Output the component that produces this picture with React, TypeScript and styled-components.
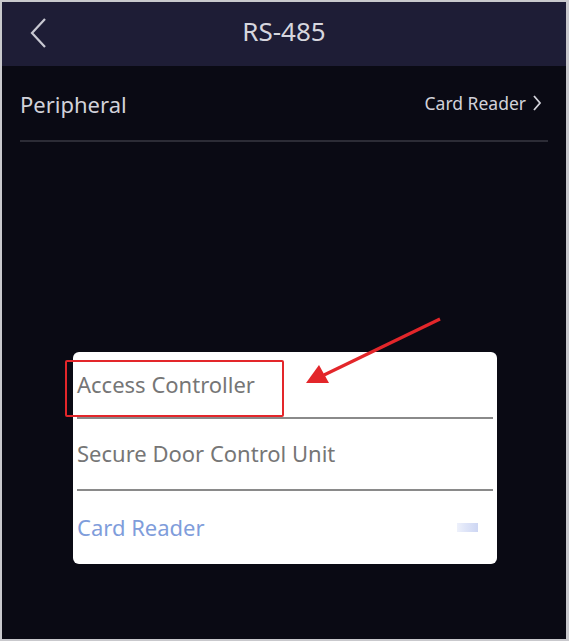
import React from 'react';
import styled, { createGlobalStyle } from 'styled-components';

const GlobalStyle = createGlobalStyle`
    html, body {
        margin: 0;
        padding: 0;
        background: #d8d8dc;
    }
    body {
        font-family: "Noto Sans", "Open Sans", sans-serif;
    }
`;

const Screen = styled.div`
    position: relative;
    width: 569px;
    height: 641px;
    box-sizing: border-box;
    border: 2px solid #c9c9cd;
    border-right-width: 3px;
    background-color: #0a0a14;
    display: flex;
    flex-direction: column;
    overflow: hidden;
`;

const Header = styled.div`
    height: 64px;
    flex-shrink: 0;
    background-color: #1e1d36;
    display: flex;
    align-items: center;
    justify-content: center;
    position: relative;
`;

const BackButton = styled.div`
    position: absolute;
    left: 24px;
    top: 15px;
    width: 24px;
    height: 32px;
    display: flex;
    align-items: center;
    justify-content: center;
`;

const Title = styled.div`
    color: #d6d6de;
    font-size: 26px;
    margin-bottom: 6px;
`;

const Body = styled.div`
    flex: 1;
    display: flex;
    flex-direction: column;
    padding: 0 18px;
`;

const SettingRow = styled.div`
    height: 74px;
    display: flex;
    align-items: center;
    justify-content: space-between;
    border-bottom: 2px solid #2c2c36;
`;

const RowLabel = styled.div`
    color: #d2d2da;
    font-size: 22px;
    margin-top: 2px;
`;

const RowValue = styled.div`
    color: #d2d2da;
    font-size: 17.5px;
    display: flex;
    align-items: center;
    gap: 6px;
    padding-right: 6px;
`;

const Popup = styled.div`
    margin: 210px 0 0 53px;
    width: 424px;
    height: 212px;
    background: #ffffff;
    border-radius: 6px;
    display: flex;
    flex-direction: column;
    padding: 0 4px;
    box-sizing: border-box;
`;

const Option = styled.div<{ $active?: boolean; $height: number }>`
    height: ${p => p.$height}px;
    box-sizing: border-box;
    flex-shrink: 0;
    display: flex;
    align-items: center;
    justify-content: space-between;
    font-size: 22px;
    padding-bottom: 2px;
    color: ${p => (p.$active ? '#7f9ddb' : '#767676')};
    border-bottom: 2px solid #8a8a8a;
    &:last-child {
        border-bottom: none;
    }
`;

const CheckMark = styled.div`
    width: 21px;
    height: 9px;
    margin-right: 15px;
    margin-top: 2px;
    background: linear-gradient(90deg, #eef1fb 0%, #dfe5f8 40%, #cdd6f3 100%);
`;

const Highlight = styled.div`
    position: absolute;
    left: 63px;
    top: 358px;
    width: 215px;
    height: 53px;
    border: 2px solid #e3262a;
    border-radius: 2px;
`;

const Arrow = styled.svg`
    position: absolute;
    left: 0;
    top: 0;
    pointer-events: none;
`;

const App: React.FC = () => {
    return (
        <>
            <GlobalStyle />
            <Screen>
                <Header>
                    <BackButton>
                        <svg width="20" height="32" viewBox="0 0 20 32">
                            <path d="M17 2 L4 16 L17 30" fill="none" stroke="#c8c8d2" strokeWidth="2.2" />
                        </svg>
                    </BackButton>
                    <Title>RS-485</Title>
                </Header>
                <Body>
                    <SettingRow>
                        <RowLabel>Peripheral</RowLabel>
                        <RowValue>
                            Card Reader
                            <svg width="10" height="18" viewBox="0 0 10 18">
                                <path d="M2 2 L8 9 L2 16" fill="none" stroke="#d2d2da" strokeWidth="1.8" />
                            </svg>
                        </RowValue>
                    </SettingRow>
                    <Popup>
                        <Option $height={67}>Access Controller</Option>
                        <Option $height={72}>Secure Door Control Unit</Option>
                        <Option $height={73} $active>
                            Card Reader
                            <CheckMark />
                        </Option>
                    </Popup>
                </Body>
                <Highlight />
                <Arrow width="569" height="641" viewBox="0 0 569 641">
                    <line x1="438" y1="317" x2="322" y2="373" stroke="#e3262a" strokeWidth="3.2" />
                    <polygon points="304,381 317,363 327,381" fill="#e3262a" />
                </Arrow>
            </Screen>
        </>
    );
};

export default App;
